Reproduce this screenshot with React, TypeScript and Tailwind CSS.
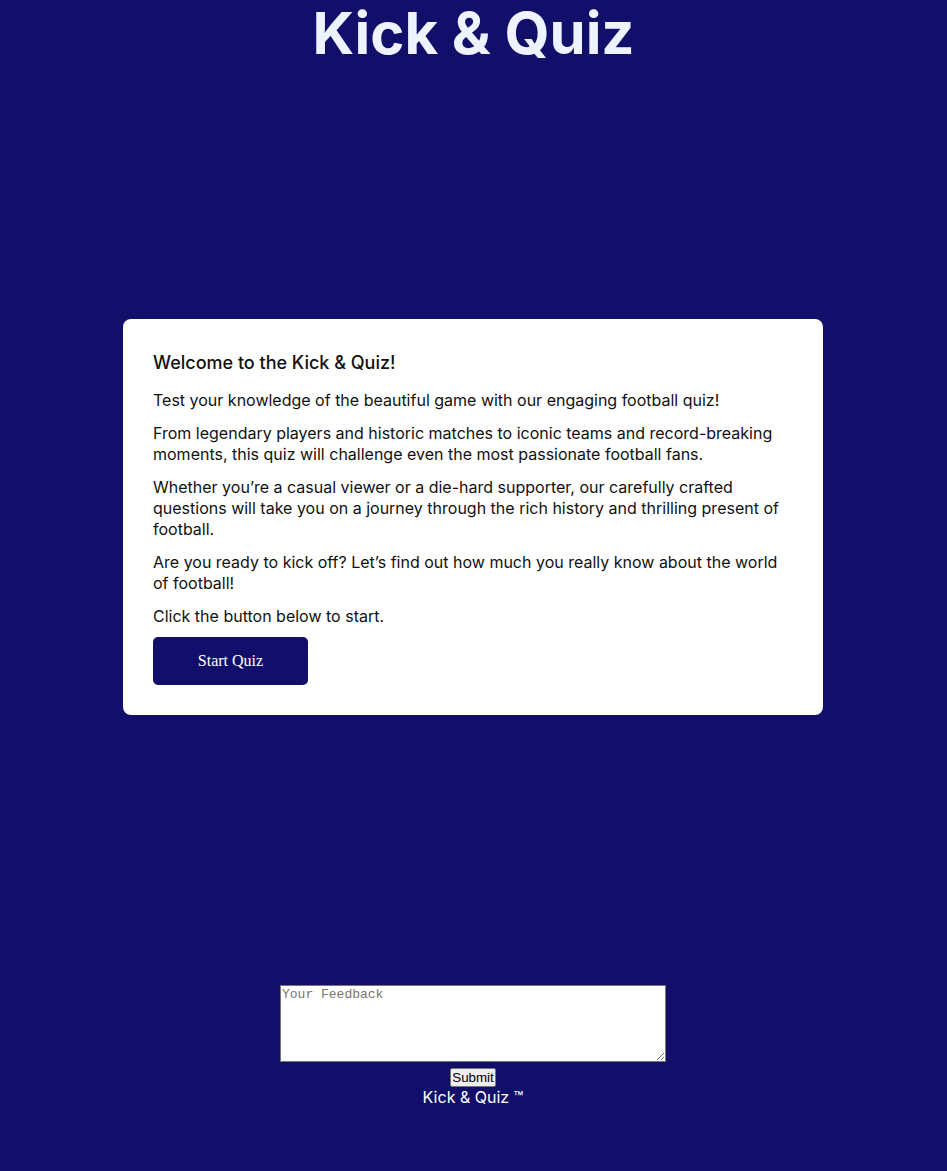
export default function App() {
  return (
    <div
      className="min-h-[1171px] bg-[#120f6b] flex flex-col items-center"
      style={{ fontFamily: 'Inter, "Noto Sans", sans-serif' }}
    >
      <h1 className="text-[58px] leading-[1.21] font-bold text-[#eef3ff] mt-[-2px]">Kick &amp; Quiz</h1>
      <main className="flex-1 w-full flex items-center justify-center pb-[19px] pr-[1px]">
        <div className="w-[700px] bg-white rounded-[8px] px-[30px] pt-[31px] pb-[30px] text-[#111]">
          <h2 className="text-[18px] font-medium leading-[22px] mb-[16px] mt-[2px]">Welcome to the Kick &amp; Quiz!</h2>
          <div className="flex flex-col gap-[12px] text-[16px] leading-[21px]">
            <p>Test your knowledge of the beautiful game with our engaging football quiz!</p>
            <p>
              From legendary players and historic matches to iconic teams and record-breaking moments, this quiz will
              challenge even the most passionate football fans.
            </p>
            <p>
              Whether you’re a casual viewer or a die-hard supporter, our carefully crafted questions will take you on a
              journey through the rich history and thrilling present of football.
            </p>
            <p>Are you ready to kick off? Let’s find out how much you really know about the world of football!</p>
            <p>Click the button below to start.</p>
          </div>
          <button
            className="mt-[10px] w-[155px] h-[48px] rounded-[5px] bg-[#120f6b] text-white text-[16px]"
            style={{ fontFamily: '"Liberation Serif", serif' }}
          >
            Start Quiz
          </button>
        </div>
      </main>
      <footer className="flex flex-col items-center pb-[63px] pr-[1px]">
        <textarea
          placeholder="Your Feedback"
          className="block w-[386px] h-[77px] bg-white border border-[#767676] text-[13px] leading-[16px] px-[1px] py-[1px] placeholder:text-[#757575]"
          style={{ fontFamily: '"Liberation Mono", "DejaVu Sans Mono", monospace' }}
        />
        <button
          className="mt-[6px] h-[19px] px-[1px] bg-[#efefef] border border-[#767676] rounded-[2px] text-[13.33px] leading-[15px] text-black"
          style={{ fontFamily: '"Liberation Sans", Arial, sans-serif' }}
        >
          Submit
        </button>
        <p className="text-white text-[16px] leading-[21px] mt-[0px]">Kick &amp; Quiz ™</p>
      </footer>
    </div>
  );
}
